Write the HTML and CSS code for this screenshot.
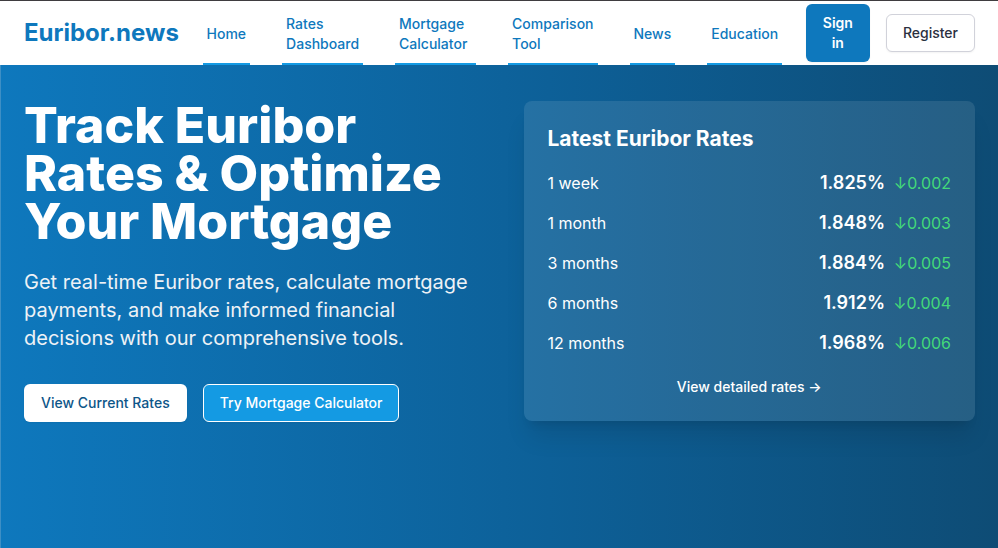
FILE: index.html
```html
<!DOCTYPE html>
<html lang="en">
<head>
<meta charset="utf-8">
<meta name="viewport" content="width=device-width, initial-scale=1">
<title>Euribor.news</title>
<link rel="stylesheet" href="styles.css">
</head>
<body>
<header class="header">
  <a class="brand" href="#">Euribor.news</a>
  <nav class="nav" aria-label="Main">
    <a class="nav-link" href="#">Home</a>
    <a class="nav-link nav-link-wide" href="#">Rates<br>Dashboard</a>
    <a class="nav-link nav-link-wide" href="#">Mortgage<br>Calculator</a>
    <a class="nav-link nav-link-wide" href="#">Comparison<br>Tool</a>
    <a class="nav-link" href="#">News</a>
    <a class="nav-link" href="#">Education</a>
  </nav>
  <div class="account">
    <a class="button button-primary" href="#">Sign<br>in</a>
    <a class="button button-outline" href="#">Register</a>
  </div>
</header>
<main class="hero">
  <section class="intro">
    <h1 class="title">Track Euribor Rates &amp; Optimize Your Mortgage</h1>
    <p class="lead">Get real-time Euribor rates, calculate mortgage payments, and make informed financial decisions with our comprehensive tools.</p>
    <div class="actions">
      <a class="button button-light" href="#">View Current Rates</a>
      <a class="button button-accent" href="#">Try Mortgage Calculator</a>
    </div>
  </section>
  <section class="card">
    <h2 class="card-title">Latest Euribor Rates</h2>
    <table class="rates">
      <tbody>
        <tr><th scope="row">1 week</th><td class="rate">1.825%</td><td class="change">↓0.002</td></tr>
        <tr><th scope="row">1 month</th><td class="rate">1.848%</td><td class="change">↓0.003</td></tr>
        <tr><th scope="row">3 months</th><td class="rate">1.884%</td><td class="change">↓0.005</td></tr>
        <tr><th scope="row">6 months</th><td class="rate">1.912%</td><td class="change">↓0.004</td></tr>
        <tr><th scope="row">12 months</th><td class="rate">1.968%</td><td class="change">↓0.006</td></tr>
      </tbody>
    </table>
    <a class="details" href="#">View detailed rates →</a>
  </section>
</main>
</body>
</html>
```
FILE: styles.css
```css
* {
  box-sizing: border-box;
}

body {
  display: flex;
  flex-direction: column;
  min-height: 100vh;
  margin: 0;
  font-family: Inter, "Liberation Sans", sans-serif;
  font-size: 16px;
  line-height: 24px;
  color: #fff;
}

a {
  color: inherit;
  text-decoration: none;
}

.header {
  display: flex;
  align-items: stretch;
  justify-content: space-between;
  height: 65px;
  padding: 0 23px 0 24px;
  border-top: 1px solid #3f3d40;
  background: #fff;
}

.brand {
  align-self: center;
  font-size: 24px;
  line-height: 32px;
  font-weight: 700;
  color: #0e78bd;
}

.nav {
  display: flex;
  gap: 32px;
}

.nav-link {
  display: flex;
  align-items: center;
  padding: 4px 4px 0;
  border-bottom: 2px solid #149ae3;
  font-size: 14px;
  line-height: 20px;
  font-weight: 500;
  color: #0e78bd;
}

.nav-link-wide {
  min-width: 81px;
}

.account {
  display: flex;
  align-items: center;
  gap: 16px;
}

.button {
  padding: 8px 16px;
  border: 1px solid transparent;
  border-radius: 6px;
  font-size: 14px;
  line-height: 20px;
  font-weight: 500;
  text-align: center;
  box-shadow: 0 1px 2px rgb(0 0 0 / 5%);
}

.button-primary {
  background: #0e78bd;
  font-weight: 600;
}

.button-outline {
  border-color: #d1d2da;
  background: #fff;
  color: #2b3040;
}

.button-light {
  background: #fff;
  color: #0d5689;
}

.button-accent {
  border-color: #fff;
  background: #149ae3;
}

.hero {
  display: grid;
  grid-template-columns: 1fr 1fr;
  align-items: start;
  gap: 48px;
  flex: 1;
  padding: 36px 23px 36px 24px;
  background: linear-gradient(90deg, #0e78bd, #0d6098 55%, #0e4c75);
  box-shadow: inset 1px 0 #3e8fc5;
}

.title {
  margin: 0;
  font-size: 50px;
  line-height: 48px;
  font-weight: 800;
}

.lead {
  margin: 23px 0 32px;
  font-size: 20px;
  line-height: 28px;
  color: #eef2f6;
}

.actions {
  display: flex;
  gap: 16px;
}

.card {
  padding: 24px;
  border-radius: 8px;
  background: rgb(255 255 255 / 10%);
  box-shadow: 0 20px 25px -5px rgb(0 0 0 / 10%), 0 8px 10px -6px rgb(0 0 0 / 10%);
}

.card-title {
  margin: 0 0 10px;
  font-size: 21px;
  line-height: 28px;
  font-weight: 700;
}

.rates {
  width: 100%;
  border-collapse: collapse;
}

.rates th,
.rates td {
  height: 40px;
  padding: 0;
  font-weight: 400;
}

.rates th {
  text-align: left;
}

.rates .rate {
  font-size: 18px;
  font-weight: 600;
  text-align: right;
}

.rates .change {
  width: 66px;
  color: #43d979;
  text-align: right;
}

.details {
  display: block;
  margin-top: 14px;
  font-size: 14px;
  line-height: 20px;
  font-weight: 500;
  text-align: center;
}
```
